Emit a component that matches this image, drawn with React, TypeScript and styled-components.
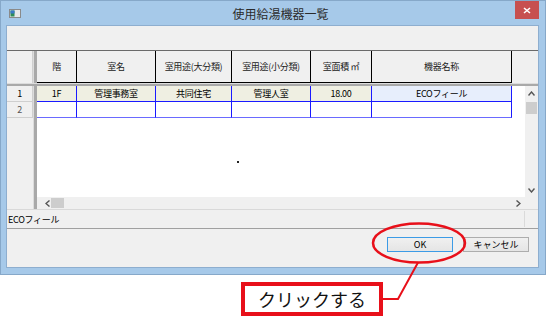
import React from 'react';
import styled, { createGlobalStyle } from 'styled-components';

const GlobalStyle = createGlobalStyle`
  html, body {
    margin: 0;
    padding: 0;
    background: #ffffff;
  }
  body {
    font-family: "Noto Sans CJK JP", "Noto Sans", sans-serif;
  }
`;

const columns = [
  { label: '階', width: 40 },
  { label: '室名', width: 79 },
  { label: '室用途(大分類)', width: 76 },
  { label: '室用途(小分類)', width: 79 },
  { label: '室面積 ㎡', width: 61 },
  { label: '機器名称', width: 140 },
];

const rows = [
  ['1F', '管理事務室', '共同住宅', '管理人室', '18.00', 'ECOフィール'],
  ['', '', '', '', '', ''],
];

const App = () => {
  return (
    <Page>
      <GlobalStyle />
      <Window>
        <TitleBar>
          <AppIcon width="12" height="9" viewBox="0 0 12 9">
            <rect x="0.5" y="0.5" width="11" height="8" fill="#e8e8e8" stroke="#8a8a8a" />
            <rect x="1.5" y="1.5" width="4" height="6" fill="#2e8b57" />
            <rect x="1.5" y="1.5" width="4" height="3" fill="#3a78c8" />
          </AppIcon>
          <Title>使用給湯機器一覧</Title>
          <CloseButton>
            <svg width="8" height="7" viewBox="0 0 8 7">
              <path d="M1 1 L7 6 M7 1 L1 6" stroke="#fff" strokeWidth="1.6" />
            </svg>
          </CloseButton>
        </TitleBar>
        <Client>
          <Toolbar />
          <Grid>
            <HeaderRow>
              <CornerCell />
              <VSplit />
              {columns.map((c) => (
                <HeadCell key={c.label} $w={c.width}>{c.label}</HeadCell>
              ))}
              <HeadFiller />
            </HeaderRow>
            <HSplit />
            <Body>
              <RowHeadCol>
                <RowHead>1</RowHead>
                <RowHead $dim>2</RowHead>
              </RowHeadCol>
              <VSplit />
              <Main>
                <DataWrap>
                  <Rows>
                    {rows.map((r, i) => (
                      <DataRow key={i}>
                        {r.map((v, j) => (
                          <DataCell
                            key={j}
                            $w={columns[j].width}
                            $bg={i === 0 ? (j === 5 ? '#e7eefc' : '#efefe2') : '#ffffff'}
                            $last={i === rows.length - 1}
                          >
                            {v}
                          </DataCell>
                        ))}
                      </DataRow>
                    ))}
                    <Dot />
                  </Rows>
                  <VScroll>
                    <Arrow>
                      <svg width="7" height="5" viewBox="0 0 7 5">
                        <path d="M0.5 4.5 L3.5 1 L6.5 4.5" stroke="#555" strokeWidth="1.4" fill="none" />
                      </svg>
                    </Arrow>
                    <VThumb />
                    <Spacer />
                    <Arrow>
                      <svg width="7" height="5" viewBox="0 0 7 5">
                        <path d="M0.5 0.5 L3.5 4 L6.5 0.5" stroke="#555" strokeWidth="1.4" fill="none" />
                      </svg>
                    </Arrow>
                  </VScroll>
                </DataWrap>
                <HScrollRow>
                  <HScroll>
                    <HArrow>
                      <svg width="5" height="7" viewBox="0 0 5 7">
                        <path d="M4.5 0.5 L1 3.5 L4.5 6.5" stroke="#555" strokeWidth="1.4" fill="none" />
                      </svg>
                    </HArrow>
                    <HThumb />
                    <Spacer />
                    <HArrow>
                      <svg width="5" height="7" viewBox="0 0 5 7">
                        <path d="M0.5 0.5 L4 3.5 L0.5 6.5" stroke="#555" strokeWidth="1.4" fill="none" />
                      </svg>
                    </HArrow>
                  </HScroll>
                  <Corner />
                </HScrollRow>
              </Main>
            </Body>
          </Grid>
          <StatusBar>
            <StatusText>ECOフィール</StatusText>
            <StatusPane />
          </StatusBar>
          <ButtonRow>
            <DlgButton $focus>OK</DlgButton>
            <DlgButton>キャンセル</DlgButton>
          </ButtonRow>
        </Client>
      </Window>
      <CalloutRow>
        <CalloutBox>クリックする</CalloutBox>
      </CalloutRow>
      <Overlay width="548" height="319" viewBox="0 0 548 319">
        <ellipse cx="419" cy="243" rx="46" ry="19.5" fill="none" stroke="#e8101a" strokeWidth="2.5" />
        <path d="M418 262.5 L398 299 L383 299" fill="none" stroke="#e8101a" strokeWidth="2" />
      </Overlay>
    </Page>
  );
};

export default App;

const Page = styled.div`
  position: relative;
  width: 548px;
  height: 319px;
  overflow: hidden;
  background: #ffffff;
`;

const Window = styled.div`
  box-sizing: border-box;
  width: 546px;
  height: 275px;
  display: flex;
  flex-direction: column;
  padding: 0 7px 7px 6px;
  background: #a6c9e9;
  border: 1px solid #86a8c9;
`;

const TitleBar = styled.div`
  height: 25px;
  display: flex;
  align-items: center;
  position: relative;
`;

const AppIcon = styled.svg`
  margin: 0 0 0 2px;
`;

const Title = styled.div`
  flex: 1;
  text-align: center;
  font-size: 12px;
  color: #2b2b2b;
  padding-left: 2px;
  margin-top: -1px;
`;

const CloseButton = styled.div`
  position: absolute;
  right: -1px;
  top: 0;
  width: 24px;
  height: 18px;
  background: #c75050;
  display: flex;
  align-items: center;
  justify-content: center;
`;

const Client = styled.div`
  flex: 1;
  display: flex;
  flex-direction: column;
  background: #f0f0f0;
  box-shadow: 0 0 0 1px #8eaecf;
`;

const Toolbar = styled.div`
  height: 24px;
`;

const Grid = styled.div`
  box-sizing: border-box;
  height: 159px;
  display: flex;
  flex-direction: column;
  border-top: 1px solid #6a6a6a;
  font-size: 9px;
  letter-spacing: -0.3px;
  color: #000;
`;

const HeaderRow = styled.div`
  height: 32px;
  display: flex;
  background: #f0f0f0;
`;

const CornerCell = styled.div`
  width: 26px;
  box-sizing: border-box;
  border-right: 1px solid #cfcfcf;
`;

const VSplit = styled.div`
  box-sizing: border-box;
  width: 4px;
  background: #a9a9a9;
  border-left: 1px solid #dcdcdc;
`;

const HeadCell = styled.div<{ $w: number }>`
  box-sizing: border-box;
  width: ${(p) => p.$w}px;
  display: flex;
  align-items: center;
  justify-content: center;
  border-right: 1px solid #000;
  border-bottom: 1px solid #000;
  white-space: nowrap;
  overflow: hidden;
  color: #222;
`;

const HeadFiller = styled.div`
  flex: 1;
`;

const HSplit = styled.div`
  height: 3px;
  background: #a9a9a9;
  border-top: 1px solid #dcdcdc;
  box-sizing: border-box;
`;

const Body = styled.div`
  flex: 1;
  display: flex;
  min-height: 0;
`;

const RowHeadCol = styled.div`
  width: 26px;
  display: flex;
  flex-direction: column;
`;

const RowHead = styled.div<{ $dim?: boolean }>`
  box-sizing: border-box;
  height: 16px;
  display: flex;
  align-items: center;
  justify-content: center;
  border-right: 1px solid #cfcfcf;
  border-bottom: 1px solid #cfcfcf;
  color: ${(p) => (p.$dim ? '#555' : '#000')};
`;

const Main = styled.div`
  flex: 1;
  display: flex;
  flex-direction: column;
`;

const DataWrap = styled.div`
  flex: 1;
  display: flex;
  background: #ffffff;
`;

const Rows = styled.div`
  flex: 1;
  position: relative;
`;

const DataRow = styled.div`
  display: flex;
  height: 16px;
`;

const DataCell = styled.div<{ $w: number; $bg: string; $last: boolean }>`
  box-sizing: border-box;
  width: ${(p) => p.$w}px;
  background: ${(p) => p.$bg};
  display: flex;
  align-items: center;
  justify-content: center;
  border-right: 1px solid #1a1aff;
  border-bottom: 1px solid ${(p) => (p.$last ? '#6a6aff' : '#1a1aff')};
  white-space: nowrap;
`;

const Dot = styled.div`
  position: absolute;
  left: 200px;
  top: 75px;
  width: 2px;
  height: 2px;
  background: #222;
`;

const VScroll = styled.div`
  width: 13px;
  display: flex;
  flex-direction: column;
  align-items: center;
  background: #f0f0f0;
`;

const Arrow = styled.div`
  height: 14px;
  display: flex;
  align-items: center;
  justify-content: center;
`;

const VThumb = styled.div`
  width: 11px;
  height: 12px;
  margin-top: 2px;
  background: #cdcdcd;
`;

const Spacer = styled.div`
  flex: 1;
`;

const HScrollRow = styled.div`
  height: 12px;
  display: flex;
`;

const HScroll = styled.div`
  flex: 1;
  display: flex;
  align-items: center;
  background: #f0f0f0;
  padding: 0 3px 0 6px;
`;

const HArrow = styled.div`
  width: 8px;
  display: flex;
  align-items: center;
  justify-content: center;
`;

const HThumb = styled.div`
  width: 13px;
  height: 10px;
  background: #cdcdcd;
`;

const Corner = styled.div`
  width: 13px;
  background: #f0f0f0;
`;

const StatusBar = styled.div`
  box-sizing: border-box;
  height: 20px;
  display: flex;
  align-items: center;
  border-top: 1px solid #d9d9d9;
  border-bottom: 1px solid #a0a0a0;
`;

const StatusText = styled.div`
  flex: 1;
  padding-left: 1px;
  font-size: 9px;
  letter-spacing: -0.3px;
  color: #000;
`;

const StatusPane = styled.div`
  width: 13px;
  height: 16px;
  border-left: 1px solid #dadada;
`;

const ButtonRow = styled.div`
  flex: 1;
  display: flex;
  justify-content: flex-end;
  align-items: flex-start;
  gap: 10px;
  padding: 8px 9px 0 0;
`;

const DlgButton = styled.div<{ $focus?: boolean }>`
  box-sizing: border-box;
  width: 66px;
  height: 15px;
  display: flex;
  align-items: center;
  justify-content: center;
  font-size: 9px;
  color: #000;
  background: linear-gradient(#f0f0f0, #e5e5e5);
  border: 1px solid ${(p) => (p.$focus ? '#3c9be6' : '#adadad')};
`;

const CalloutRow = styled.div`
  display: flex;
  padding: 7px 0 0 241px;
`;

const CalloutBox = styled.div`
  box-sizing: border-box;
  width: 142px;
  height: 34px;
  border: 4px solid #e8101a;
  display: flex;
  align-items: center;
  justify-content: center;
  font-size: 18px;
  color: #111;
  background: #fff;
`;

const Overlay = styled.svg`
  position: absolute;
  left: 0;
  top: 0;
  pointer-events: none;
`;
